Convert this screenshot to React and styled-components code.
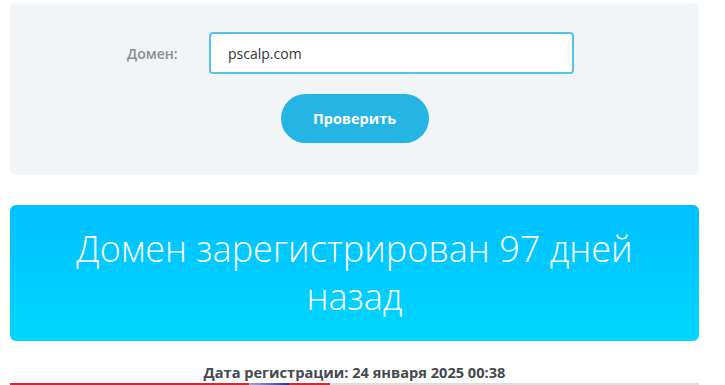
import styled, { createGlobalStyle } from "styled-components";

const Global = createGlobalStyle`
    body {
        margin: 0;
        background: #ffffff;
        font-family: "Open Sans", "Noto Sans", sans-serif;
    }
`

const Page = styled.div`
    width: 689px;
    padding: 3px 0 0 10px;
`

const FormCard = styled.form`
    display: flex;
    flex-flow: column;
    align-items: center;
    height: 172px;
    box-sizing: border-box;
    padding-top: 29px;
    background-color: #f2f5f7;
    border-radius: 6px;
`

const Row = styled.div`
    display: flex;
    align-items: center;
    margin-right: 8px;
    gap: 31px;
`

const Label = styled.label`
    width: 51px;
    font-size: 14px;
    font-weight: 600;
    color: #8a8d90;
`

const Input = styled.input`
    width: 365px;
    height: 42px;
    box-sizing: border-box;
    padding: 0 17px;
    border: 2px solid #55c4ec;
    border-radius: 4px;
    background: #ffffff;
    font-family: inherit;
    font-size: 14px;
    color: #333;
    outline: none;
`

const Button = styled.button`
    margin-top: 20px;
    width: 148px;
    height: 49px;
    border: none;
    border-radius: 25px;
    background-color: #25b5e5;
    color: #ffffff;
    font-family: inherit;
    font-size: 14.5px;
    font-weight: 700;
`

const Result = styled.section`
    margin-top: 30px;
    height: 136px;
    display: flex;
    align-items: center;
    justify-content: center;
    border-radius: 6px;
    background: linear-gradient(180deg, #00c0ff 0%, #00d6ff 100%);

    h2 {
        margin: 0;
        width: 620px;
        text-align: center;
        font-size: 36px;
        font-weight: 300;
        line-height: 48px;
        color: #ffffff;
    }
`

const RegDate = styled.p`
    margin: 22px 0 0;
    text-align: center;
    font-size: 14.6px;
    line-height: 18px;
    font-weight: 700;
    color: #444a4f;
`

const Bar = styled.div`
    display: flex;
    height: 2px;
    margin-top: 2px;
    background-color: #dedede;
`

const Segment = styled.div`
    width: ${({w}) => w}px;
    background: ${({c}) => c};
`

const App = () => {
    return (
        <Page>
            <Global />
            <FormCard onSubmit={e => e.preventDefault()}>
                <Row>
                    <Label>Домен:</Label>
                    <Input defaultValue="pscalp.com" />
                </Row>
                <Button>Проверить</Button>
            </FormCard>
            <Result>
                <h2>Домен зарегистрирован 97 дней назад</h2>
            </Result>
            <RegDate>Дата регистрации: 24 января 2025 00:38</RegDate>
            <Bar>
                <Segment w={239} c="#e8202a" />
                <Segment w={40} c="linear-gradient(90deg, #a0a8f0, #1c2fb8)" />
                <Segment w={41} c="#e8202a" />
            </Bar>
        </Page>
    );
}

export default App;
